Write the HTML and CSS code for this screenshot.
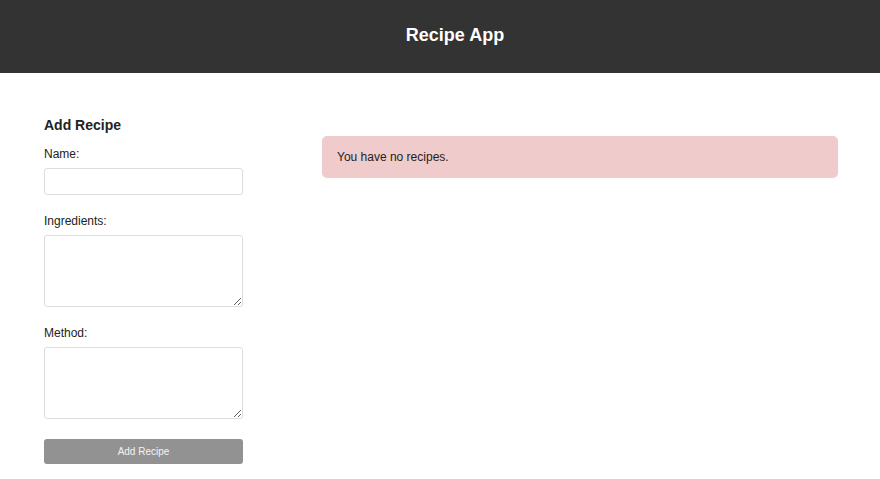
FILE: index.html
```html
<!DOCTYPE html>
<html>
<head>
<meta charset="utf-8">
<title>Recipe App</title>
<link rel="stylesheet" href="styles.css">
</head>
<body>
<header class="topbar">
  <h1 class="title">Recipe App</h1>
</header>
<main class="layout">
  <form class="recipe-form">
    <h2 class="form-title">Add Recipe</h2>
    <label class="field-label" for="name">Name:</label>
    <input class="field-input" id="name" type="text">
    <label class="field-label" for="ingredients">Ingredients:</label>
    <textarea class="field-area" id="ingredients"></textarea>
    <label class="field-label" for="method">Method:</label>
    <textarea class="field-area" id="method"></textarea>
    <button class="submit-btn" type="button">Add Recipe</button>
  </form>
  <section class="recipes">
    <div class="alert">You have no recipes.</div>
  </section>
</main>
</body>
</html>
```
FILE: styles.css
```css
* { box-sizing: border-box; }
html, body { margin: 0; padding: 0; }
body {
  font-family: "Liberation Sans", Arial, sans-serif;
  color: #222;
  background: #fff;
}
.topbar {
  height: 73px;
  background: #333;
  display: flex;
  align-items: center;
  justify-content: center;
  padding-left: 30px;
}
.title {
  margin: 0;
  color: #fff;
  font-size: 18px;
  font-weight: bold;
  line-height: 20px;
  padding-bottom: 4px;
}
.layout {
  display: grid;
  grid-template-columns: 199px 1fr;
  column-gap: 79px;
  padding: 0 42px 0 44px;
}
.recipe-form {
  display: flex;
  flex-direction: column;
  padding-top: 44px;
}
.form-title {
  margin: 0 0 14px;
  font-size: 14px;
  line-height: 16px;
  font-weight: bold;
  color: #222;
}
.field-label {
  font-size: 12px;
  line-height: 14px;
  color: #222;
  margin-bottom: 7px;
}
.field-input {
  height: 27px;
  border: 1px solid #ddd;
  border-radius: 3px;
  margin: 0 0 19px;
  padding: 4px 6px;
  font-family: inherit;
  font-size: 12px;
}
.field-area {
  height: 72px;
  border: 1px solid #ddd;
  border-radius: 3px;
  margin: 0 0 19px;
  padding: 4px 6px;
  font-family: inherit;
  font-size: 12px;
  resize: both;
}
.field-area:last-of-type { margin-bottom: 20px; }
.submit-btn {
  height: 25px;
  border: none;
  border-radius: 3px;
  background: #929292;
  color: #f4f4f4;
  font-family: inherit;
  font-size: 10px;
  padding: 0;
}
.recipes {
  padding-top: 63px;
}
.alert {
  height: 42px;
  display: flex;
  align-items: center;
  padding: 0 15px;
  background: #f0cbcb;
  border-radius: 5px;
  font-size: 12px;
  color: #222;
}
```
